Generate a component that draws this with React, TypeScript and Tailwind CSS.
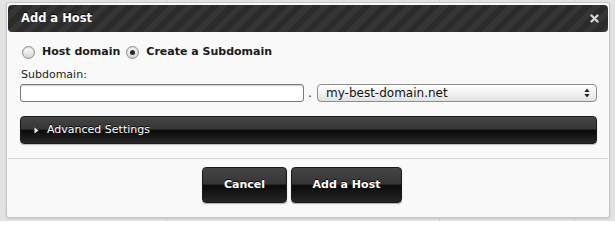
import React from 'react';

// Aqua-ish radio button
function Radio({ checked }: { checked?: boolean }) {
  return (
    <span className="flex h-[13px] w-[13px] shrink-0 items-center justify-center rounded-full border border-[#8e8e8e] bg-[linear-gradient(to_bottom,#ffffff,#e4e4e4_60%,#d2d2d2)] shadow-[inset_0_1px_1px_rgba(0,0,0,0.15)]">
      {checked && <span className="h-[5px] w-[5px] rounded-full bg-[#2a2a2a]" />}
    </span>
  );
}

const darkGloss =
  'bg-[linear-gradient(to_bottom,#454545_0%,#363636_46%,#0b0b0b_52%,#151515_70%,#262626_100%)]';

export default function App() {
  return (
    <div className="relative h-[221px] w-[615px] overflow-hidden bg-[#e3e3e3] font-['DejaVu_Sans',sans-serif]">
      {/* table behind the modal */}
      <div className="flex h-full">
        <div className="w-[167px] border-r border-[#cfcfcf]" />
        <div className="w-[273px] border-r border-[#cfcfcf]" />
        <div className="w-[135px] border-r border-[#cfcfcf]" />
        <div className="flex-1" />
      </div>

      {/* Dialog */}
      <div className="absolute left-[6px] top-[2px] flex h-[216px] w-[604px] flex-col rounded-[3px] border border-[#c6c6c6] bg-[#f9f9f9] shadow-[0_1px_2px_rgba(0,0,0,0.12)]">
        <div className="px-[1px] pt-[2px]">
          <div className="flex h-[27px] items-center justify-between rounded-[4px] bg-[repeating-linear-gradient(135deg,#2b2b2b_0px,#2b2b2b_6px,#353535_6px,#353535_12px)] pl-[13px] pr-[9px]">
            <span className="text-[11.5px] font-bold text-white [text-shadow:0_-1px_0_#000]">Add a Host</span>
            <svg width="9" height="9" viewBox="0 0 9 9">
              <path d="M1.5 1.5 L7.5 7.5 M7.5 1.5 L1.5 7.5" stroke="#d6d6d6" strokeWidth="2.4" strokeLinecap="round" />
            </svg>
          </div>
        </div>

        <div className="pl-[13px] pr-[12px]">
          {/* radio choice */}
          <div className="mt-[14px] flex h-[13px] items-center pl-[2px] text-[11px] font-bold text-[#1a1a1a]">
            <Radio />
            <span className="ml-[7px]">Host domain</span>
            <span className="ml-[6px]">
              <Radio checked />
            </span>
            <span className="ml-[7px]">Create a Subdomain</span>
          </div>

          <div className="mt-[9px] h-[13px] pl-[1px] text-[11px] leading-[13px] text-[#222]">Subdomain:</div>

          <div className="mt-[3px] flex h-[18px] items-center">
            <input
              className="h-[18px] w-[284px] rounded-[3px] border border-[#7a7a7a] bg-white px-1 text-[12px] shadow-[inset_0_1px_1px_rgba(0,0,0,0.2)] outline-none"
              defaultValue=""
            />
            <span className="w-[12px] text-center text-[12px] leading-[18px] text-[#333]">.</span>
            <div className="ml-[1px] flex h-[18px] flex-1 items-center justify-between rounded-[4px] border border-[#8c8c8c] bg-[linear-gradient(to_bottom,#ffffff,#f3f3f3_50%,#e2e2e2)] pl-[8px] pr-[6px] shadow-[0_1px_0_rgba(255,255,255,0.6)]">
              <span className="text-[12px] leading-none text-[#111]">my-best-domain.net</span>
              <svg width="6" height="10" viewBox="0 0 6 10">
                <path d="M3 0.5 L5.6 4 L0.4 4 Z" fill="#222" />
                <path d="M3 9.5 L5.6 6 L0.4 6 Z" fill="#222" />
              </svg>
            </div>
          </div>

          {/* Advanced settings bar */}
          <div
            className={`mt-[14px] flex h-[28px] items-center rounded-[4px] border border-[#1a1a1a] ${darkGloss} pl-[13px] shadow-[0_1px_1px_rgba(0,0,0,0.25)]`}
          >
            <svg width="5" height="7" viewBox="0 0 5 7">
              <path d="M0.5 0.5 L4.5 3.5 L0.5 6.5 Z" fill="#eee" />
            </svg>
            <span className="ml-[8px] text-[11px] text-white [text-shadow:0_-1px_0_#000]">Advanced Settings</span>
          </div>
        </div>

        <div className="mx-[1px] mt-[14px] h-px bg-[#d4d4d4]" />

        <div className="mt-[8px] flex gap-[4px] pl-[195px]">
          <button
            className={`h-[36px] w-[85px] rounded-[4px] border border-[#1a1a1a] ${darkGloss} text-[11px] font-bold text-white shadow-[0_1px_1px_rgba(0,0,0,0.3)] [text-shadow:0_-1px_0_#000]`}
          >
            Cancel
          </button>
          <button
            className={`h-[36px] w-[111px] rounded-[4px] border border-[#1a1a1a] ${darkGloss} text-[11px] font-bold text-white shadow-[0_1px_1px_rgba(0,0,0,0.3)] [text-shadow:0_-1px_0_#000]`}
          >
            Add a Host
          </button>
        </div>
      </div>
    </div>
  );
}
